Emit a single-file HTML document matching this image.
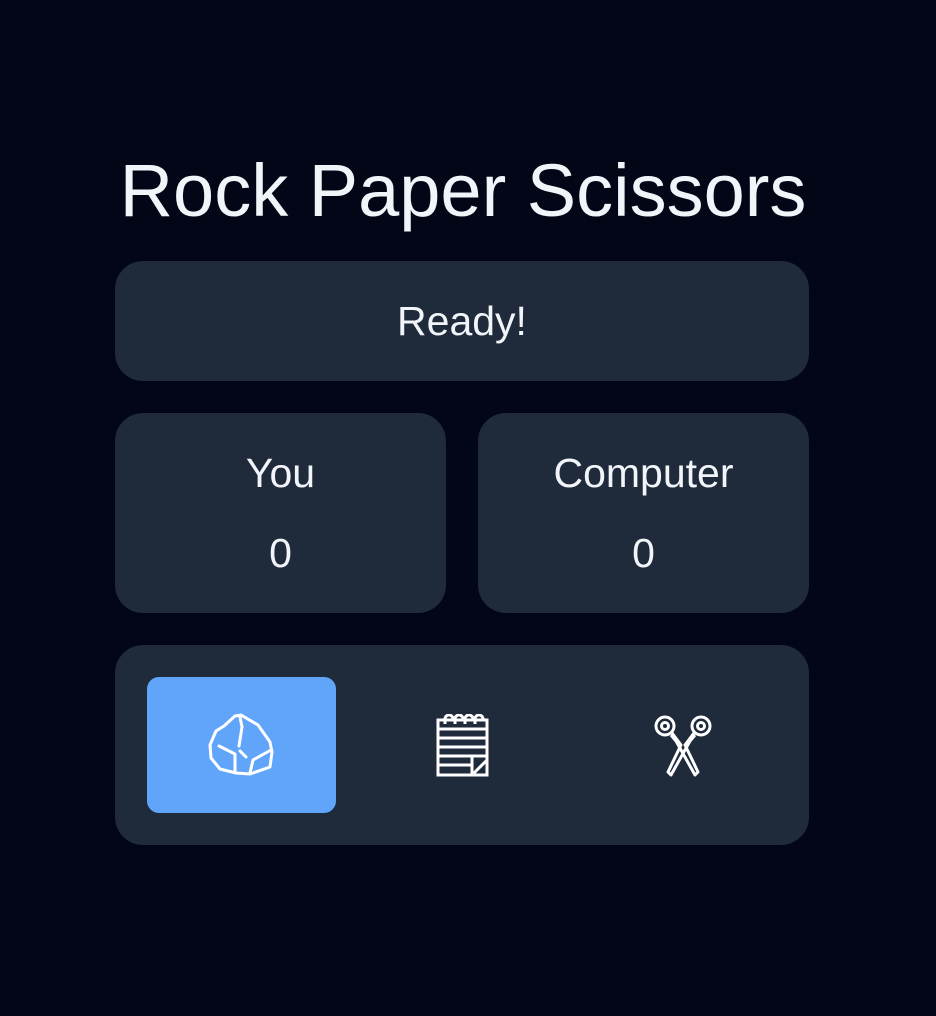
<!DOCTYPE html>
<html><head><style>
body{margin:0;width:936px;height:1016px;background:#030616;font-family:"Liberation Sans",sans-serif;color:#f1f5f9;position:relative;overflow:hidden}
.t{position:absolute;left:0;width:926px;text-align:center;top:148px;font-size:74px;line-height:86px}
.c{position:absolute;background:#1f2a3b;border-radius:28px}
.lab{position:absolute;left:0;right:0;text-align:center;font-size:41px;line-height:48px}
.b{position:absolute;top:32px;width:189px;height:136px;border-radius:12px}
svg{position:absolute}
</style></head><body>
<div class="t">Rock Paper Scissors</div>
<div class="c" style="left:115px;top:261px;width:694px;height:120px"><div class="lab" style="top:36px">Ready!</div></div>
<div class="c" style="left:115px;top:413px;width:331px;height:200px"><div class="lab" style="top:36px">You</div><div class="lab" style="top:116px">0</div></div>
<div class="c" style="left:478px;top:413px;width:331px;height:200px"><div class="lab" style="top:36px">Computer</div><div class="lab" style="top:116px">0</div></div>
<div class="c" style="left:115px;top:645px;width:694px;height:200px">
<div class="b" style="left:32px;background:#60a5fa"></div>
</div>
<svg style="left:208px;top:713px" width="66" height="64" viewBox="0 0 66 64" fill="none" stroke="#fff" stroke-width="3" stroke-linejoin="round" stroke-linecap="round">
<path d="M33 2 L27 3 L16 13 L8 18 L2 32 L3 45 L12 56 L28 60 L42 61 L62 54 L64 39 L62 29 L50 12 Z"/>
<path d="M32 4 L34 14 L31 33"/><path d="M11 33 L27 41 L27 59"/><path d="M32 38 L38 44"/><path d="M42 60 L45 47 L63 37"/>
</svg>
<svg style="left:436px;top:714px" width="53" height="63" viewBox="0 0 53 63" fill="none" stroke="#fff" stroke-width="3">
<rect x="2" y="6" width="49" height="55"/>
<path d="M2 15H51M2 24H51M2 33H51M2 42H51M2 51H36M36 42V61M36 61L51 46"/>
<path d="M9 10V5a4 4 0 0 1 8 0M19 10V5a4 4 0 0 1 8 0M29 10V5a4 4 0 0 1 8 0M39 10V5a4 4 0 0 1 8 0"/>
</svg>
<svg style="left:654px;top:714px" width="58" height="63" viewBox="0 0 58 63" fill="none" stroke="#fff" stroke-width="3" stroke-linejoin="round">
<circle cx="11" cy="12" r="9"/><circle cx="11" cy="12" r="3.5"/>
<circle cx="47" cy="12" r="9"/><circle cx="47" cy="12" r="3.5"/>
<path d="M18 19 L27 31 L14 58 L17 61 L36 27 L41 21"/>
<path d="M40 19 L31 31 L44 58 L41 61 L22 27 L17 21"/>
</svg>
</body></html>
